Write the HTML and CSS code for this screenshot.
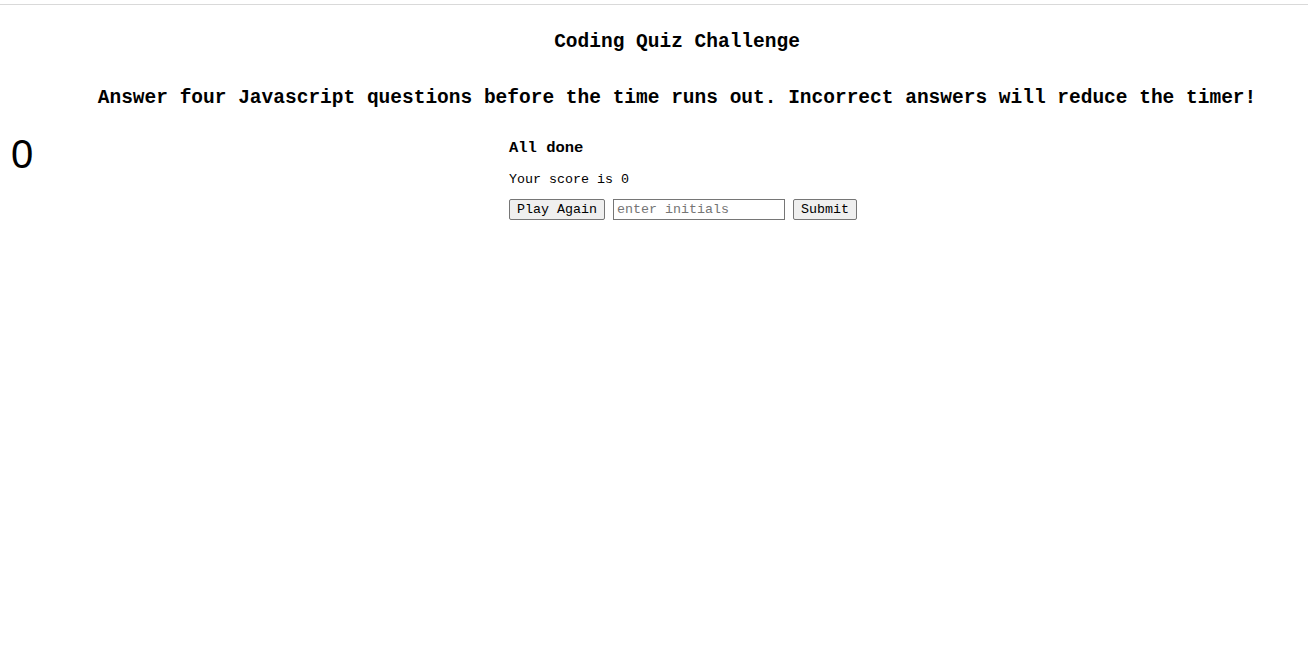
FILE: index.html
```html
<!DOCTYPE html>
<html>
<head>
<meta charset="utf-8">
<title>Coding Quiz Challenge</title>
<link rel="stylesheet" href="styles.css">
</head>
<body>
<div class="topline"></div>
<header class="header">
  <h1 class="title">Coding Quiz Challenge</h1>
  <h2 class="subtitle">Answer four Javascript questions before the time runs out. Incorrect answers will reduce the timer!</h2>
</header>
<main class="main">
  <div class="timer">0</div>
  <section class="quiz">
    <h3 class="done">All done</h3>
    <p class="score">Your score is 0</p>
    <div class="controls">
      <button class="btn">Play Again</button>
      <input class="initials" type="text" placeholder="enter initials">
      <button class="btn">Submit</button>
    </div>
  </section>
</main>
</body>
</html>
```
FILE: styles.css
```css
html, body {
  margin: 0;
  padding: 0;
  background: #fff;
}
body {
  font-family: "Liberation Mono", "Courier New", monospace;
  color: #000;
}
.topline {
  height: 4px;
  border-bottom: 1px solid #d9d9d9;
}
.header {
  padding-left: 46px;
  text-align: center;
}
.title {
  font-size: 19.5px;
  font-weight: bold;
  margin: 26px 0 0;
  line-height: 22px;
}
.subtitle {
  font-size: 19.5px;
  font-weight: bold;
  margin: 34px 0 0;
  line-height: 22px;
}
.main {
  display: flex;
  align-items: flex-start;
  margin-top: 26px;
}
.timer {
  font-family: "Liberation Sans", Arial, sans-serif;
  font-size: 40px;
  line-height: 50px;
  margin-left: 11px;
  width: 498px;
  margin-top: -6px;
}
.quiz {
  padding-top: 4px;
}
.done {
  font-size: 15.5px;
  font-weight: bold;
  margin: 0;
  line-height: 18px;
}
.score {
  font-size: 13.33px;
  margin: 15px 0 0;
  line-height: 16px;
}
.controls {
  margin-top: 11px;
  display: flex;
  gap: 8px;
  align-items: center;
}
.btn {
  font-family: "Liberation Mono", "Courier New", monospace;
  font-size: 13.33px;
  height: 21px;
  padding: 0 7px;
  border: 1px solid #767676;
  border-radius: 2px;
  background: #efefef;
  color: #000;
  line-height: 19px;
}
.initials {
  font-family: "Liberation Mono", "Courier New", monospace;
  font-size: 13.33px;
  width: 172px;
  height: 21px;
  box-sizing: border-box;
  padding: 1px 3px;
  border: 1px solid #767676;
  border-radius: 0;
  margin: 0;
}
.initials::placeholder {
  color: #757575;
}
```
